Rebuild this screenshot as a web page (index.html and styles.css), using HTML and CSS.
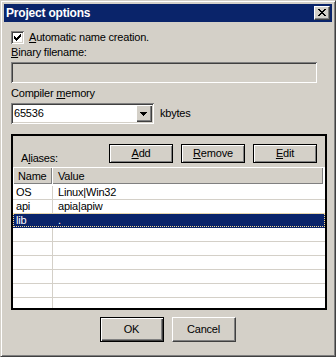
FILE: index.html
```html
<!DOCTYPE html>
<html>
<head>
<meta charset="utf-8">
<link rel="stylesheet" href="styles.css">
</head>
<body>
<div class="window">
  <div class="titlebar">
    <span class="title">Project options</span>
    <span class="close">
      <svg width="8" height="7" viewBox="0 0 8 7" shape-rendering="crispEdges"><path fill="#000" d="M0 0h2v1h-2zM6 0h2v1h-2zM1 1h2v1h-2zM5 1h2v1h-2zM2 2h4v1h-4zM3 3h2v1h-2zM2 4h4v1h-4zM1 5h2v1h-2zM5 5h2v1h-2zM0 6h2v1h-2zM6 6h2v1h-2z"/></svg>
    </span>
  </div>
  <div class="client">
    <div class="check-row">
      <span class="checkbox">
        <svg width="7" height="7" viewBox="0 0 7 7" shape-rendering="crispEdges"><path fill="#000" d="M6 0h1v1h-1zM5 1h2v1h-2zM0 2h1v1h-1zM4 2h3v1h-3zM0 3h2v1h-2zM3 3h3v1h-3zM0 4h5v1h-5zM1 5h3v1h-3zM2 6h1v1h-1z"/></svg>
      </span>
      <span class="check-label"><u>A</u>utomatic name creation.</span>
    </div>
    <div class="label binary"><u>B</u>inary filename:</div>
    <div class="field edit-disabled"></div>
    <div class="label memory">Compiler <u>m</u>emory</div>
    <div class="combo-row">
      <div class="field combo">
        <span class="combo-text">65536</span>
        <span class="combo-btn">
          <svg width="7" height="4" viewBox="0 0 7 4" shape-rendering="crispEdges"><path fill="#000" d="M0 0h7v1h-7zM1 1h5v1h-5zM2 2h3v1h-3zM3 3h1v1h-1z"/></svg>
        </span>
      </div>
      <span class="unit">kbytes</span>
    </div>
    <div class="aliases">
      <div class="aliases-top">
        <span class="aliases-label">A<u>l</u>iases:</span>
        <div class="tool-btns">
          <span class="tool-btn"><u>A</u>dd</span>
          <span class="tool-btn"><u>R</u>emove</span>
          <span class="tool-btn"><u>E</u>dit</span>
        </div>
      </div>
      <div class="lv-header">
        <div class="hcol hname">Name</div>
        <div class="hcol hvalue">Value</div>
      </div>
      <div class="lv-rows">
        <div class="row"><div class="cell cname">OS</div><div class="cell cvalue">Linux|Win32</div></div>
        <div class="row"><div class="cell cname">api</div><div class="cell cvalue">apia|apiw</div></div>
        <div class="row selected"><div class="cell cname">lib</div><div class="cell cvalue">.</div></div>
        <div class="row"><div class="cell cname"></div><div class="cell cvalue"></div></div>
        <div class="row"><div class="cell cname"></div><div class="cell cvalue"></div></div>
        <div class="row"><div class="cell cname"></div><div class="cell cvalue"></div></div>
        <div class="row"><div class="cell cname"></div><div class="cell cvalue"></div></div>
        <div class="row"><div class="cell cname"></div><div class="cell cvalue"></div></div>
        <div class="row"><div class="cell cname"></div><div class="cell cvalue"></div></div>
      </div>
    </div>
    <div class="footer">
      <span class="btn default">OK</span>
      <span class="btn">Cancel</span>
    </div>
  </div>
</div>
</body>
</html>
```
FILE: styles.css
```css
* { box-sizing: border-box; }
html, body { margin: 0; padding: 0; }
body {
  font-family: "Liberation Sans", Arial, sans-serif;
  font-size: 11px;
  line-height: 13px;
  letter-spacing: -0.2px;
  color: #000;
  background: #d4d0c8;
}
u { text-decoration: underline; text-decoration-thickness: 1px; text-underline-offset: 1px; }

.window {
  width: 336px;
  height: 357px;
  background: #d4d0c8;
  border: 1px solid;
  border-color: #d4d0c8 #404040 #404040 #d4d0c8;
  box-shadow: inset 1px 1px #fff, inset -1px -1px #808080;
  padding: 3px;
  display: flex;
  flex-direction: column;
}

.titlebar {
  height: 18px;
  flex: none;
  background: #0a246a;
  display: flex;
  align-items: center;
  justify-content: space-between;
  padding: 0 2px 0 2px;
}
.title {
  color: #fff;
  font-weight: bold;
  font-size: 12px;
  line-height: 14px;
}
.close {
  width: 16px;
  height: 14px;
  background: #d4d0c8;
  border: 1px solid;
  border-color: #fff #404040 #404040 #fff;
  box-shadow: inset -1px -1px #808080;
  display: flex;
  align-items: center;
  justify-content: center;
  padding: 0 1px 1px 0;
}
.close svg, .checkbox svg, .combo-btn svg { display: block; }

.client {
  flex: 1;
  padding: 9px 8px 0 7px;
  display: flex;
  flex-direction: column;
  align-items: flex-start;
}

.check-row {
  display: flex;
  align-items: center;
  height: 13px;
}
.checkbox {
  width: 13px;
  height: 13px;
  background: #fff;
  box-shadow: inset 1px 1px #808080, inset -1px -1px #fff, inset 2px 2px #404040, inset -2px -2px #d4d0c8;
  display: flex;
  align-items: center;
  justify-content: center;
}
.check-label { margin-left: 5px; }

.label { line-height: 13px; }
.binary { margin-top: 2px; }
.memory { margin-top: 4px; }

.field {
  height: 21px;
  box-shadow: inset 1px 1px #808080, inset -1px -1px #fff, inset 2px 2px #404040, inset -2px -2px #d4d0c8;
}
.edit-disabled {
  width: 306px;
  margin-top: 3px;
  background: #d4d0c8;
}

.combo-row {
  margin-top: 3px;
  display: flex;
  align-items: center;
}
.combo {
  width: 143px;
  background: #fff;
  display: flex;
  align-items: center;
  padding: 2px;
}
.combo-text { flex: 1; padding-left: 1px; }
.combo-btn {
  width: 16px;
  height: 17px;
  background: #d4d0c8;
  box-shadow: inset 1px 1px #fff, inset -1px -1px #404040, inset -2px -2px #808080;
  display: flex;
  align-items: center;
  justify-content: center;
  padding: 1px 1px 0 0;
}
.unit { margin-left: 6px; }

.aliases {
  margin-top: 10px;
  width: 316px;
  height: 176px;
  border: 2px solid #000;
  background: #fff;
  display: flex;
  flex-direction: column;
}
.aliases-top {
  height: 31px;
  flex: none;
  background: #d4d0c8;
  display: flex;
  align-items: flex-start;
  padding: 8px 8px 0 8px;
}
.aliases-label { margin-top: 8px; }
.tool-btns {
  margin-left: auto;
  display: flex;
  gap: 8px;
}
.tool-btn {
  width: 64px;
  height: 19px;
  border: 1px solid #000;
  box-shadow: inset 1px 1px #fff, inset -1px -1px #808080;
  background: #d4d0c8;
  display: flex;
  align-items: center;
  justify-content: center;
  padding-bottom: 1px;
}

.lv-header {
  height: 17px;
  flex: none;
  display: flex;
  background: #fff;
}
.hcol {
  height: 17px;
  background: #d4d0c8;
  box-shadow: inset 1px 1px #fff, inset -1px -1px #808080;
  padding-top: 3px;
}
.hname { width: 39px; padding-left: 5px; }
.hvalue { width: 271px; padding-left: 6px; }

.lv-rows {
  flex: 1;
  overflow: hidden;
  padding-top: 2px;
  background: #fff;
}
.row {
  height: 14px;
  display: flex;
  border-bottom: 1px solid #d4d0c8;
  position: relative;
}
.cell { height: 13px; line-height: 13px; }
.cname { width: 40px; padding-left: 3px; border-right: 1px solid #d4d0c8; }
.cvalue { flex: 1; padding-left: 5px; }
.row.selected {
  background: #0a246a;
  color: #fff;
  border-bottom-color: #0a246a;
}
.row.selected .cname { border-right-color: #0a246a; }
.row.selected::after {
  content: "";
  position: absolute;
  left: 0; right: 0; top: -1px; bottom: 0;
  border: 1px dotted #f5db95;
}

.footer {
  align-self: stretch;
  margin-top: 7px;
  display: flex;
  justify-content: center;
  gap: 8px;
}
.btn {
  width: 64px;
  height: 25px;
  background: #d4d0c8;
  border: 1px solid;
  border-color: #fff #404040 #404040 #fff;
  box-shadow: inset -1px -1px #808080;
  display: flex;
  align-items: center;
  justify-content: center;
}
.btn.default {
  border: 1px solid #000;
  box-shadow: inset 1px 1px #fff, inset -1px -1px #404040, inset -2px -2px #808080;
}
```
